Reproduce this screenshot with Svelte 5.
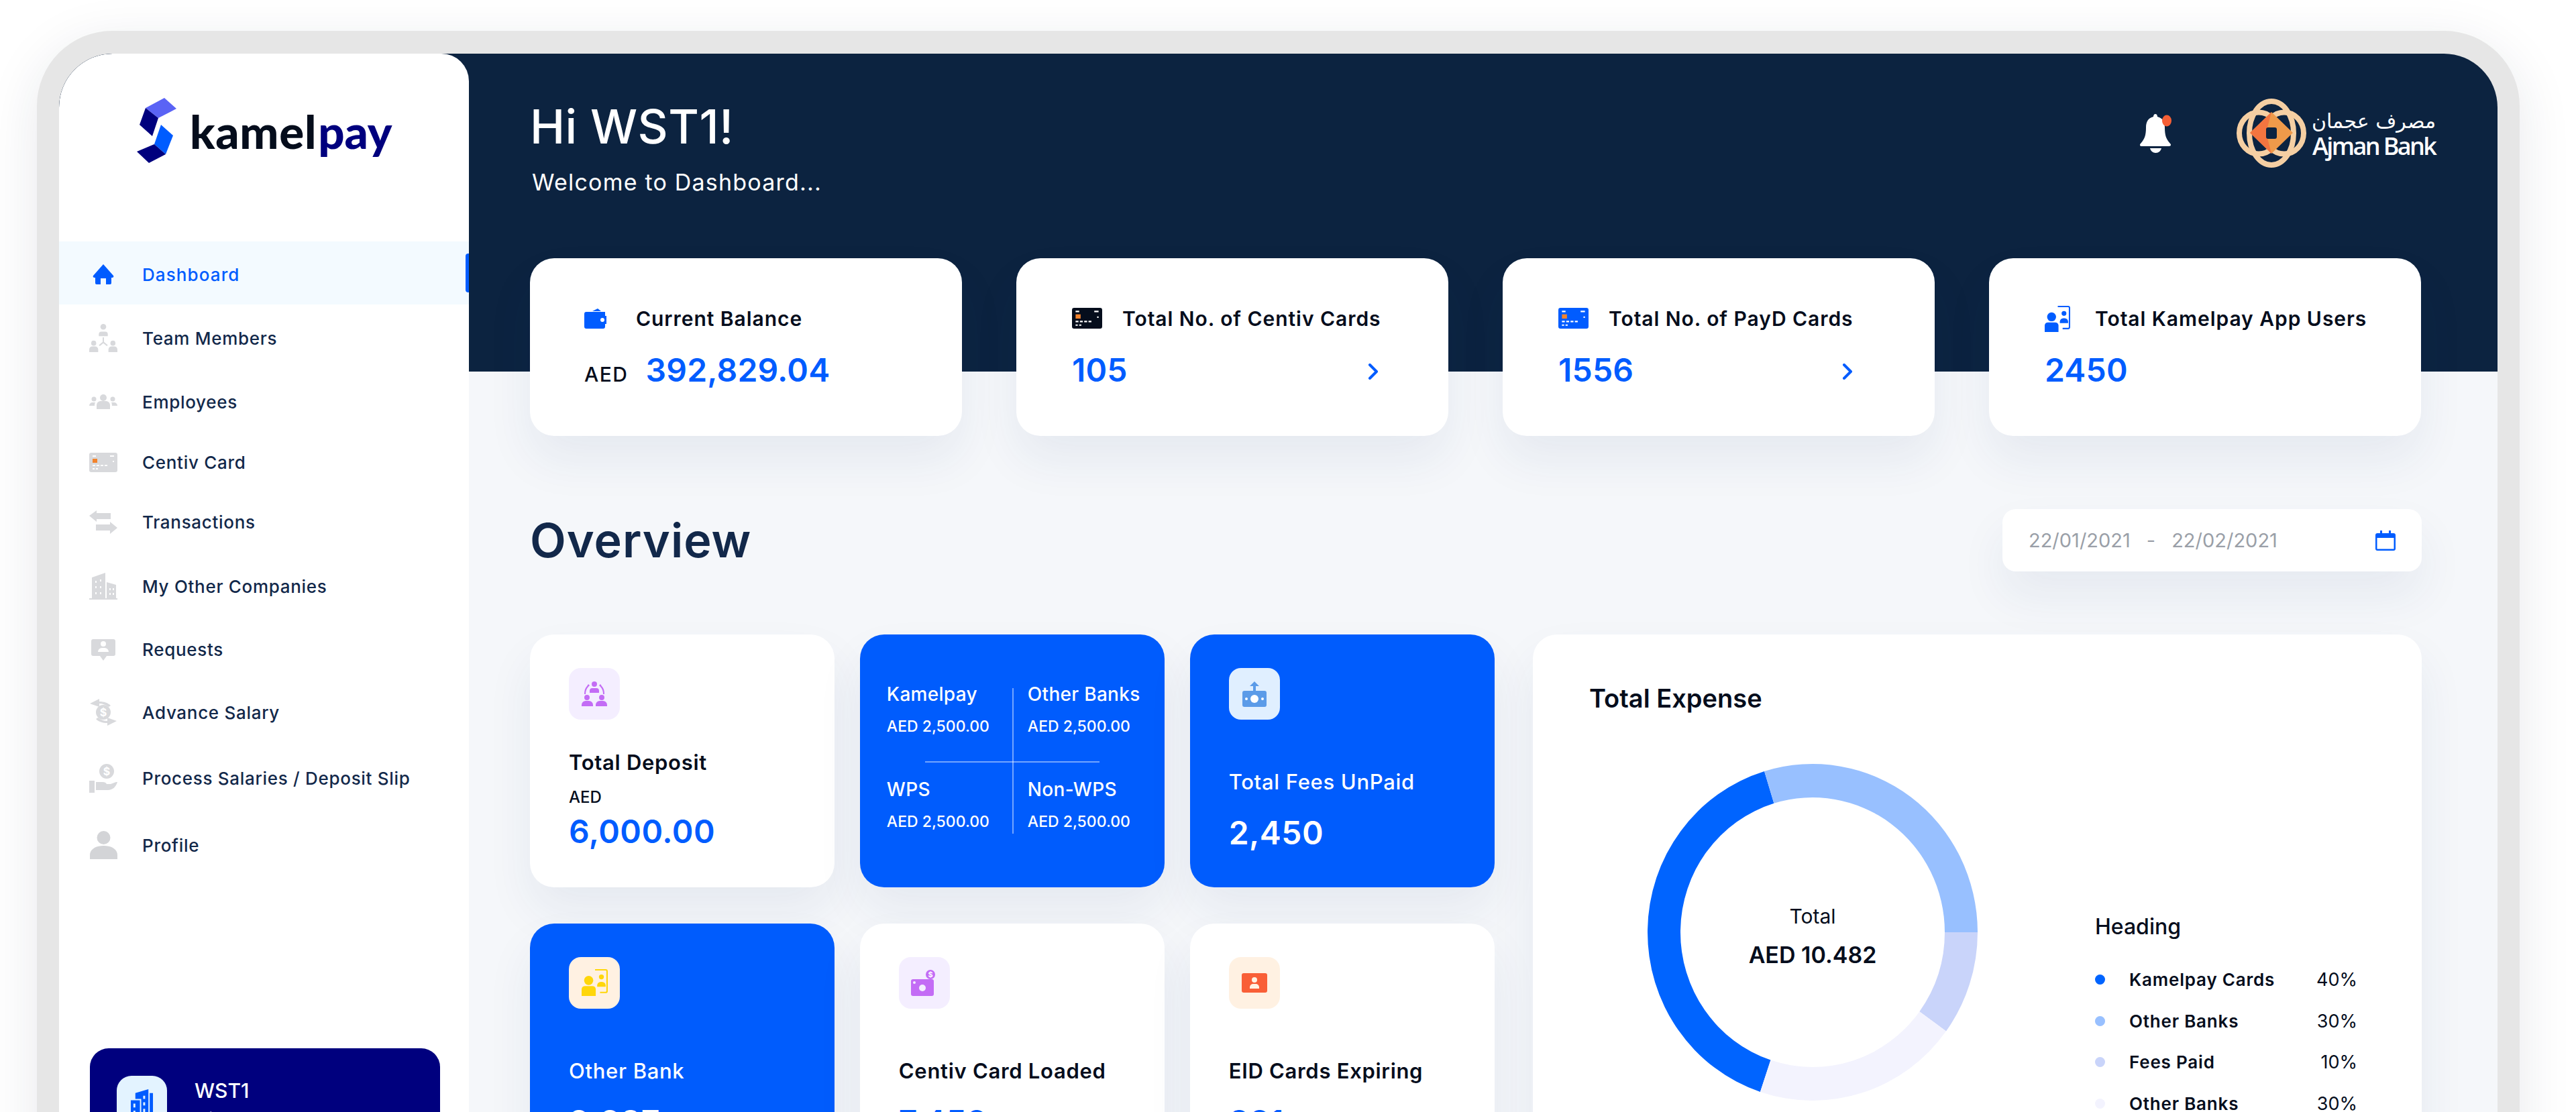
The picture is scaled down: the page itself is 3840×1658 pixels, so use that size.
<script>
  const c = (x, y, r) => `M${x - r} ${y}a${r} ${r} 0 1 0 ${2 * r} 0a${r} ${r} 0 1 0 ${-2 * r} 0z`;
  const G = '#d8d9dc';
  const W = '#ffffff';

  const cardIcon = (bg, dash) => [
    { d: 'M3 0h36a3 3 0 0 1 3 3v23a3 3 0 0 1-3 3H3a3 3 0 0 1-3-3V3a3 3 0 0 1 3-3z', f: bg },
    { d: 'M5 4h5v2H5zM31 4h6v2h-6zM5 18h4v2H5zM11 18h4v2h-4zM17 18h4v2h-4zM23 18h4v2h-4zM35 12h2v2h-2zM5 23h3v2H5zM10 23h3v2h-3z', f: dash },
    { d: 'M5 9h7v6H5z', f: '#f2832d' }
  ];
  const usersIcon = (fg) => [
    { d: 'M19 0h15a3 3 0 0 1 3 3v28a3 3 0 0 1-3 3H26v-2h8a1 1 0 0 0 1-1V3a1 1 0 0 0-1-1H19z', f: fg },
    { d: c(28, 11, 3.5), f: fg },
    { d: 'M22 23a5 5 0 0 1 5-5h2a5 5 0 0 1 5 5v2H22z', f: fg },
    { d: c(10, 16, 6.5), f: fg },
    { d: 'M0 38V28a5 5 0 0 1 5-4h10a5 5 0 0 1 5 4v10z', f: fg }
  ];

  const nav = [
    { label: 'Dashboard', h: 94, active: true, w: 32, vb: '0 0 32 30', shapes: [
      { d: 'M16 0 31 17c1 1.500 0 3-2 3h-1v8a2 2 0 0 1-2 2h-6v-9h-8v9H6a2 2 0 0 1-2-2v-8H3c-2 0-3-1.500-2-3z', f: '#005cff' }
    ] },
    { label: 'Team Members', h: 100, w: 44, vb: '0 0 44 44', shapes: [
      { d: c(22, 4.500, 4.500), f: G },
      { d: 'M15 19v-3a4 4 0 0 1 4-4h6a4 4 0 0 1 4 4v3z', f: G },
      { d: 'M21 21h2v7l6 5-1.500 1.500L22 30l-5.500 4.500L15 33l6-5z', f: G },
      { d: c(7, 30, 4), f: G },
      { d: 'M0 44v-4a5 5 0 0 1 5-5h4a5 5 0 0 1 5 5v4z', f: G },
      { d: c(37, 30, 4), f: G },
      { d: 'M30 44v-4a5 5 0 0 1 5-5h4a5 5 0 0 1 5 5v4z', f: G }
    ] },
    { label: 'Employees', h: 90, w: 42, vb: '0 0 42 22', shapes: [
      { d: c(21, 5, 5), f: G },
      { d: 'M11 22v-6a6 6 0 0 1 6-6h8a6 6 0 0 1 6 6v6z', f: G },
      { d: c(7, 7, 3.500), f: G },
      { d: 'M0 17a5 5 0 0 1 5-5h4a8 8 0 0 0-1 5z', f: G },
      { d: c(35, 7, 3.500), f: G },
      { d: 'M42 17a5 5 0 0 0-5-5h-4a8 8 0 0 1 1 5z', f: G }
    ] },
    { label: 'Centiv Card', h: 90, w: 42, vb: '0 0 42 29', shapes: cardIcon(G, W) },
    { label: 'Transactions', h: 89, w: 42, vb: '0 0 42 35', shapes: [
      { d: 'M0 8 11 0v4h21v9H11v4z', f: G },
      { d: 'M42 26 31 35v-5H10v-9h21v-4z', f: G }
    ] },
    { label: 'My Other Companies', h: 102, w: 42, vb: '0 0 42 40', shapes: [
      { d: 'M4 38V7L24 0v38zM26 14l14 4v20H26zM0 38h42v2H0z', f: G },
      { d: 'M9 12h2v3H9zM16 10h2v3h-2zM9 20h2v3H9zM16 20h2v3h-2zM9 29h2v3H9zM16 29h2v3h-2zM30 23h2v3h-2zM35 23h2v3h-2zM30 30h2v3h-2zM35 30h2v3h-2z', f: W }
    ] },
    { label: 'Requests', h: 87, w: 36, vb: '0 0 36 32', shapes: [
      { d: 'M3 0h30a3 3 0 0 1 3 3v19a3 3 0 0 1-3 3H23l-5 7-5-7H3a3 3 0 0 1-3-3V3a3 3 0 0 1 3-3z', f: G },
      { d: c(18, 7, 4), f: W },
      { d: 'M10 19a6 6 0 0 1 6-6h4a6 6 0 0 1 6 6z', f: W }
    ] },
    { label: 'Advance Salary', h: 100, w: 40, vb: '0 0 40 40', shapes: [
      { d: c(20, 20, 11), f: G },
      { d: 'M0 7 14 0v4c7 0 13 2 17 6l-3 2c-4-3-9-5-14-5v5z', f: G },
      { d: 'M40 33 26 40v-4c-7 0-13-2-17-6l3-2c4 3 9 5 14 5v-5z', f: G }
    ], dollar: [20, 26] },
    { label: 'Process Salaries / Deposit Slip', h: 96, w: 42, vb: '0 0 42 43', shapes: [
      { d: c(26, 11, 11), f: G },
      { d: 'M0 25h8v18H0zM10 27h10c3 0 5 1 6 3h6l8-3h2c-2 7-7 12-14 12H10z', f: G }
    ], dollar: [26, 17] },
    { label: 'Profile', h: 104, w: 41, vb: '0 0 41 42', shapes: [
      { d: c(20.500, 10, 10), f: '#d3d4d7' },
      { d: 'M0 42v-6c0-9 9-14 20.500-14S41 27 41 36v6z', f: '#d3d4d7' }
    ] }
  ];

  const stats = [
    { title: 'Current Balance', value: '392,829.04', aed: true, w: 34, vb: '0 0 34 30', shapes: [
      { d: 'M3 5h28v6h2v12h-2v4a3 3 0 0 1-3 3H3a3 3 0 0 1-3-3V8a3 3 0 0 1 3-3z', f: '#005cff' },
      { d: 'M12 4 20 0l5 4z', f: '#005cff' },
      { d: c(27, 17, 3), f: W }
    ] },
    { title: 'Total No. of Centiv Cards', value: '105', arrow: true, w: 45, vb: '0 0 42 29', shapes: cardIcon('#050d1c', W) },
    { title: 'Total No. of PayD Cards', value: '1556', arrow: true, w: 45, vb: '0 0 42 29', shapes: cardIcon('#005cff', W) },
    { title: 'Total Kamelpay App Users', value: '2450', w: 38, vb: '0 0 37 38', shapes: usersIcon('#005cff') }
  ];

  const cells = [
    ['Kamelpay', 'AED 2,500.00'],
    ['Other Banks', 'AED 2,500.00'],
    ['WPS', 'AED 2,500.00'],
    ['Non-WPS', 'AED 2,500.00']
  ];

  const legend = [
    ['Kamelpay Cards', '40%', '#0064ff'],
    ['Other Banks', '30%', '#98c0ff'],
    ['Fees Paid', '10%', '#c9d4fa'],
    ['Other Banks', '30%', '#f3f3fe']
  ];

  const RX = 246, RY = 251, IX = 197, IY = 201;
  const pt = (a, rx, ry) => {
    const t = (a * Math.PI) / 180;
    return `${(RX + rx * Math.cos(t)).toFixed(2)} ${(RY + ry * Math.sin(t)).toFixed(2)}`;
  };
  const arc = (a, b) =>
    `M${pt(a, RX, RY)}A${RX} ${RY} 0 0 1 ${pt(b, RX, RY)}L${pt(b, IX, IY)}A${IX} ${IY} 0 0 0 ${pt(a, IX, IY)}Z`;
  const donut = [
    { d: arc(108.5, 253), f: '#0064ff' },
    { d: arc(253, 360), f: '#98c0ff' },
    { d: arc(0, 36), f: '#c9d4fa' },
    { d: arc(36, 108.5), f: '#f3f3fe' }
  ];
</script>

{#snippet shapes(list)}
  {#each list as s}
    <path d={s.d} fill={s.f} fill-rule="evenodd" />
  {/each}
{/snippet}

<div class="page">
  <div class="frame">
    <div class="screen">
      <aside class="sidebar">
        <div class="logo">
          <svg class="logo-mark" width="59" height="97" viewBox="0 0 59 97">
            <polygon points="13,15 41,0 59,16 32,30" fill="#5a63f5" />
            <polygon points="13,15 32,30 23,57 4,40" fill="#00007e" />
            <polygon points="36,40 54,56 43,84 26,69" fill="#005cff" />
            <polygon points="26,69 43,84 18,97 0,80" fill="#00007e" />
          </svg>
          <span class="logo-text"><span class="kamel">kamel</span><span class="pay">pay</span></span>
        </div>

        <nav class="nav">
          {#each nav as item}
            <div class="nav-row" class:active={item.active} style="height:{item.h}px">
              <span class="nav-icon">
                <svg width={item.w} viewBox={item.vb}>
                  {@render shapes(item.shapes)}
                  {#if item.dollar}
                    <text x={item.dollar[0]} y={item.dollar[1]} class="dollar" text-anchor="middle">$</text>
                  {/if}
                </svg>
              </span>
              <span class="nav-label">{item.label}</span>
            </div>
          {/each}
        </nav>

        <div class="company">
          <div class="company-icon">
            <svg width="35" height="47" viewBox="0 0 36 48">
              <path d="M8 12 28 6v42H8zM30 12h5v36h-5z" fill="#005cff" />
              <path d="M0 22h16v26H0z" fill="#005cff" stroke="#e3f3ff" stroke-width="2" />
              <path d="M5 28h3v6H5zM5 39h3v6H5zM20 16h3v5h-3zM20 26h3v5h-3zM20 36h3v5h-3z" fill="#e3f3ff" />
            </svg>
          </div>
          <div class="company-text">
            <div class="company-name">WST1</div>
            <div class="company-id">Client ID : 1700045</div>
          </div>
        </div>
      </aside>

      <main class="main">
        <header class="topbar">
          <div class="greet">
            <h1>Hi WST1!</h1>
            <p>Welcome to Dashboard...</p>
          </div>
          <div class="top-right">
            <svg class="bell" width="47" height="58" viewBox="0 0 47 58">
              <path d="M23 0c2 0 3 2 3 4 8 2 11 8 11 16 0 12 2 17 8 24 2 2 1 4-2 4H3c-3 0-4-2-2-4 6-7 8-12 8-24 0-8 3-14 11-16 0-2 1-4 3-4z" fill="#fff" />
              <path d="M15 51h17c-1 4-4 7-8.500 7S16 55 15 51z" fill="#fff" />
              <ellipse cx="40" cy="10" rx="7" ry="8.500" fill="#f55f36" />
            </svg>
            <div class="bank">
              <svg width="104" height="103" viewBox="0 0 104 103">
                <g fill="none" stroke="#f5cfa3" stroke-width="8">
                  <ellipse cx="52" cy="51.500" rx="33" ry="47.500" />
                  <ellipse cx="33" cy="51.500" rx="29" ry="31" />
                  <ellipse cx="71" cy="51.500" rx="29" ry="31" />
                </g>
                <path d="M52 20 84 51 52 82 20 51z" fill="#ef9a4a" />
                <path d="M52 20 20 51 52 82 44 51z" fill="#f5683d" opacity=".75" />
                <rect x="44" y="43" width="16" height="17" rx="3" fill="#0c2340" />
              </svg>
              <div class="bank-text">
                <div class="bank-ar" dir="rtl" lang="ar">مصرف عجمان</div>
                <div class="bank-en">Ajman Bank</div>
              </div>
            </div>
          </div>
        </header>

        <section class="stats">
          {#each stats as s}
            <div class="stat card">
              <div class="stat-title">
                <span class="stat-icon">
                  <svg width={s.w} viewBox={s.vb}>{@render shapes(s.shapes)}</svg>
                </span>
                <span>{s.title}</span>
              </div>
              <div class="stat-value">
                {#if s.aed}<span class="aed">AED</span>{/if}
                <span class="num">{s.value}</span>
                {#if s.arrow}
                  <svg class="chev" width="16" height="24" viewBox="0 0 16 24">
                    <path d="M3 2 13 12 3 22" fill="none" stroke="#005cff" stroke-width="4" stroke-linecap="round" stroke-linejoin="round" />
                  </svg>
                {/if}
              </div>
            </div>
          {/each}
        </section>

        <div class="overview-row">
          <h2>Overview</h2>
          <div class="dates">
            <span class="date">22/01/2021</span>
            <span class="dash">-</span>
            <span class="date">22/02/2021</span>
            <svg class="cal" width="30" height="30" viewBox="0 0 30 30">
              <path d="M3 4h4V0h3v4h10V0h3v4h4a3 3 0 0 1 3 3v20a3 3 0 0 1-3 3H3a3 3 0 0 1-3-3V7a3 3 0 0 1 3-3zM2.500 11v16.500h25V11z" fill="#005cff" fill-rule="evenodd" />
            </svg>
          </div>
        </div>

        <section class="lower">
          <div class="tiles">
            <div class="tile card deposit">
              <div class="tile-box purple">
                <svg width="38" viewBox="0 0 38 37">
                  <path d="M19 0a4 4 0 1 1 0 8 4 4 0 0 1 0-8zM12 17v-3a4 4 0 0 1 4-4h6a4 4 0 0 1 4 4v3zM10 4 8 7C5 10 4 14 4 19h2c0-4 1-8 4-11l2-2zM28 4l2 3c3 3 4 7 4 12h-2c0-4-1-8-4-11l-2-2z" fill="#c36cf5" />
                  <path d="M8 20a4 4 0 1 1 0 8 4 4 0 0 1 0-8zM0 37v-2a6 6 0 0 1 6-6h5a6 6 0 0 1 6 6v2zM30 20a4 4 0 1 1 0 8 4 4 0 0 1 0-8zM21 37v-2a6 6 0 0 1 6-6h5a6 6 0 0 1 6 6v2z" fill="#c36cf5" />
                </svg>
              </div>
              <div class="tile-title dark">Total Deposit</div>
              <div class="tile-aed">AED</div>
              <div class="tile-value blue">6,000.00</div>
            </div>

            <div class="tile split">
              {#each cells as cell}
                <div class="cell">
                  <div class="cell-name">{cell[0]}</div>
                  <div class="cell-amount">{cell[1]}</div>
                </div>
              {/each}
              <span class="line-v"></span>
              <span class="line-h"></span>
            </div>

            <div class="tile solid">
              <div class="tile-box sky">
                <svg width="36" viewBox="0 0 36 38">
                  <path d="M3 14h30a3 3 0 0 1 3 3v18a3 3 0 0 1-3 3H3a3 3 0 0 1-3-3V17a3 3 0 0 1 3-3z" fill="#5b9be8" />
                  <path d="M18 0l7 7h-5v7h-4V7h-5z" fill="#5b9be8" />
                  <circle cx="18" cy="26" r="6" fill="#fff" />
                  <circle cx="6" cy="26" r="2" fill="#fff" />
                  <circle cx="30" cy="26" r="2" fill="#fff" />
                </svg>
              </div>
              <div class="tile-title">Total Fees UnPaid</div>
              <div class="tile-value">2,450</div>
            </div>

            <div class="tile solid">
              <div class="tile-box peach">
                <svg width="39" viewBox="0 0 37 38">{@render shapes(usersIcon('#ffd60a'))}</svg>
              </div>
              <div class="tile-title">Other Bank</div>
              <div class="tile-value">2,287</div>
            </div>

            <div class="tile card">
              <div class="tile-box purple">
                <svg width="39" viewBox="0 0 39 39">
                  <path d="M3 14h28a3 3 0 0 1 3 3v19a3 3 0 0 1-3 3H3a3 3 0 0 1-3-3V17a3 3 0 0 1 3-3z" fill="#c36cf5" />
                  <circle cx="17" cy="27" r="5" fill="#f4eeff" />
                  <circle cx="5" cy="19" r="2" fill="#f4eeff" />
                  <circle cx="29" cy="7" r="7" fill="#c36cf5" />
                  <text x="29" y="11" class="dollar small" text-anchor="middle">$</text>
                </svg>
              </div>
              <div class="tile-title dark">Centiv Card Loaded</div>
              <div class="tile-value blue">7,452</div>
            </div>

            <div class="tile card">
              <div class="tile-box peach">
                <svg width="38" viewBox="0 0 38 29">
                  <path d="M3 0h32a3 3 0 0 1 3 3v23a3 3 0 0 1-3 3H3a3 3 0 0 1-3-3V3a3 3 0 0 1 3-3z" fill="#f95f37" />
                  <circle cx="19" cy="10" r="4" fill="#fff3e4" />
                  <path d="M12 23v-2a5 5 0 0 1 5-5h4a5 5 0 0 1 5 5v2z" fill="#fff3e4" />
                </svg>
              </div>
              <div class="tile-title dark">EID Cards Expiring</div>
              <div class="tile-value blue">321</div>
            </div>
          </div>

          <div class="expense card">
            <h3>Total Expense</h3>
            <div class="donut">
              <svg width="492" height="502" viewBox="0 0 492 502">{@render shapes(donut)}</svg>
              <div class="donut-center">
                <div class="dc-label">Total</div>
                <div class="dc-value">AED 10.482</div>
              </div>
            </div>
            <div class="legend">
              <div class="legend-head">Heading</div>
              {#each legend as row}
                <div class="legend-row">
                  <span class="dot" style="background:{row[2]}"></span>
                  <span class="legend-name">{row[0]}</span>
                  <span class="legend-pct">{row[1]}</span>
                </div>
              {/each}
            </div>
          </div>
        </section>
      </main>
    </div>
  </div>
</div>

<style>
  :global(body) {
    margin: 0;
    background: #fff;
    font-family: Inter, "Noto Sans", sans-serif;
  }
  h1, h2, h3, p { margin: 0; }

  .page {
    width: 3840px;
    height: 1658px;
    overflow: hidden;
    padding: 46px 84px 0 55px;
    box-sizing: border-box;
  }
  .frame {
    height: 1800px;
    box-sizing: border-box;
    padding: 34px 33px 0;
    background: #e6e6e6;
    border-radius: 112px;
    box-shadow: 0 20px 80px rgba(30, 40, 70, 0.1);
  }
  .screen {
    display: flex;
    height: 1760px;
    border-radius: 80px;
    overflow: hidden;
    background: linear-gradient(#0c2340 474px, #f5f7fa 474px);
  }

  .sidebar {
    width: 611px;
    flex: none;
    background: #fff;
    border-radius: 80px 41px 0 0;
  }
  .logo {
    height: 280px;
    box-sizing: border-box;
    padding: 66px 0 0 116px;
    display: flex;
    align-items: flex-start;
    gap: 20px;
  }
  .logo-text {
    display: block;
    margin-top: 10px;
    font-family: Lato, sans-serif;
    font-weight: 900;
    line-height: 80px;
    white-space: nowrap;
  }
  .kamel { color: #050d1c; font-size: 69px; letter-spacing: 0.700px; margin-right: 2px; }
  .pay { color: #00007e; font-size: 69px; }

  .nav-row {
    position: relative;
    display: flex;
    align-items: center;
    padding-left: 45px;
    box-sizing: border-box;
    font-size: 26px;
    font-weight: 450;
    color: #12284a;
  }
  .nav-row.active {
    background: #f3faff;
    color: #005cff;
    font-weight: 500;
    padding-top: 4px;
  }
  .nav-row.active .nav-label { letter-spacing: 1.100px; }
  .nav-row.active::after {
    content: "";
    position: absolute;
    right: 0;
    top: 18px;
    width: 5px;
    height: 58px;
    background: #005cff;
    border-radius: 4px 0 0 4px;
  }
  .nav-icon {
    width: 42px;
    margin-right: 37px;
    display: flex;
    justify-content: center;
    flex: none;
  }
  .nav-icon svg { display: block; }
  .nav-label { letter-spacing: 0.700px; white-space: nowrap; }
  .dollar {
    font-family: Inter, sans-serif;
    font-size: 16px;
    font-weight: 700;
    fill: #fff;
  }
  .dollar.small { font-size: 11px; }

  .company {
    margin: 251px 0 0 46px;
    width: 522px;
    height: 200px;
    box-sizing: border-box;
    padding: 41px 0 0 40px;
    display: flex;
    align-items: flex-start;
    gap: 41px;
    background: #00007e;
    border-radius: 28px;
    color: #fff;
  }
  .company-icon {
    width: 75px;
    height: 90px;
    display: flex;
    align-items: flex-start;
    justify-content: center;
    padding-top: 14px;
    box-sizing: border-box;
    background: #e3f3ff;
    border-radius: 22px;
  }
  .company-name { font-size: 30px; font-weight: 500; line-height: 44px; }
  .company-id { font-size: 22px; margin-top: 5px; }

  .main {
    flex: 1;
    min-width: 0;
    padding: 0 113px 0 91px;
  }
  .topbar {
    height: 305px;
    display: flex;
    justify-content: space-between;
    color: #fff;
  }
  .greet { padding-top: 69px; }
  .greet h1 { font-size: 70px; font-weight: 500; line-height: 80px; letter-spacing: 0.500px; }
  .greet p {
    font-size: 34px;
    line-height: 40px;
    font-weight: 400;
    margin: 23px 0 0 3px;
    letter-spacing: 1.200px;
  }
  .top-right {
    display: flex;
    align-items: flex-start;
    margin-right: -21px;
  }
  .bell { margin: 90px 97px 0 0; }
  .bank { display: flex; margin-top: 67px; gap: 9px; }
  .bank-text { width: 184px; color: #fff; }
  .bank-ar {
    font-family: "DejaVu Sans", sans-serif;
    font-size: 30px;
    line-height: 32px;
    margin-top: 18px;
    white-space: nowrap;
  }
  .bank-en {
    font-family: "Open Sans", sans-serif;
    font-weight: 600;
    font-size: 36px;
    line-height: 40px;
    letter-spacing: -2.600px;
    margin-top: 1px;
    white-space: nowrap;
  }

  .card {
    background: #fff;
    box-shadow: 0 36px 70px rgba(30, 60, 110, 0.07);
  }
  .stats {
    display: grid;
    grid-template-columns: repeat(4, 644px);
    gap: 81px;
  }
  .stat {
    height: 265px;
    box-sizing: border-box;
    padding: 75px 122px 0 83px;
    border-radius: 36px;
    color: #050d1c;
  }
  .stat:first-child { padding-left: 81px; }
  .stat:first-child .stat-icon { min-width: 77px; }
  .stat-title {
    display: flex;
    align-items: center;
    height: 30px;
    font-size: 30px;
    font-weight: 600;
    white-space: nowrap;
    letter-spacing: 0.950px;
  }
  .stat-icon { min-width: 75px; }
  .stat-icon svg { display: block; }
  .stat-value {
    position: relative;
    display: flex;
    align-items: baseline;
    margin-top: 32px;
    line-height: 60px;
  }
  .aed { font-size: 30px; font-weight: 500; letter-spacing: 1.500px; margin-right: 26px; }
  .num { font-size: 48px; font-weight: 600; color: #005cff; letter-spacing: 0.200px; }
  .chev { position: absolute; right: 0; top: 20px; }
  .stat:nth-child(2) .chev { right: -18px; }

  .overview-row {
    margin-top: 109px;
    height: 93px;
    display: flex;
    align-items: center;
    justify-content: space-between;
  }
  .overview-row h2 {
    font-size: 70px;
    font-weight: 600;
    color: #12284a;
    letter-spacing: 1px;
  }
  .dates {
    width: 625px;
    height: 93px;
    box-sizing: border-box;
    padding: 0 39px;
    display: flex;
    align-items: center;
    background: #fff;
    border-radius: 20px;
    box-shadow: 0 36px 70px rgba(30, 60, 110, 0.07);
    color: #9a9fa8;
    font-size: 29px;
  }
  .dash { margin: 0 24px; }
  .cal { margin-left: auto; }

  .lower {
    margin-top: 94px;
    display: flex;
    gap: 57px;
  }
  .tiles {
    width: 1438px;
    flex: none;
    display: grid;
    grid-template-columns: repeat(3, 1fr);
    grid-auto-rows: 377px;
    gap: 54px 37.5px;
  }
  .tile {
    position: relative;
    box-sizing: border-box;
    padding: 50px 58px 0;
    border-radius: 36px;
  }
  .tile.solid, .tile.split {
    background: #005cfd;
    color: #fff;
    box-shadow: 0 36px 70px rgba(30, 60, 110, 0.07);
  }
  .tile-box {
    width: 76px;
    height: 77px;
    border-radius: 18px;
    display: flex;
    align-items: center;
    justify-content: center;
  }
  .purple { background: #f4eeff; }
  .sky { background: #e0efff; }
  .peach { background: #fff1e2; }
  .tile-title {
    margin-top: 73px;
    font-size: 31px;
    line-height: 40px;
    font-weight: 500;
    white-space: nowrap;
    letter-spacing: 0.700px;
  }
  .tile-title.dark { font-weight: 600; color: #050d1c; }
  .tile-value {
    margin-top: 26px;
    font-size: 48px;
    line-height: 60px;
    font-weight: 600;
    letter-spacing: 0.5px;
  }
  .blue { color: #005cff; }
  .deposit .tile-title { margin-top: 44px; }
  .deposit .tile-aed {
    margin-top: 17px;
    font-size: 24px;
    line-height: 30px;
    font-weight: 500;
    color: #050d1c;
  }
  .deposit .tile-value { margin-top: 6px; }

  .tile.split {
    padding: 72px 0 0 40px;
    display: grid;
    grid-template-columns: 210px 1fr;
    grid-auto-rows: 142px;
    align-content: start;
  }
  .cell-name { font-size: 28px; line-height: 34px; font-weight: 500; letter-spacing: 0.300px; white-space: nowrap; }
  .cell-amount { margin-top: 16px; font-size: 23px; line-height: 30px; font-weight: 500; white-space: nowrap; }
  .line-v {
    position: absolute;
    left: 227px;
    top: 80px;
    width: 2px;
    height: 217px;
    background: rgba(255, 255, 255, 0.45);
  }
  .line-h {
    position: absolute;
    left: 97px;
    top: 189px;
    width: 260px;
    height: 2px;
    background: rgba(255, 255, 255, 0.45);
  }

  .expense {
    position: relative;
    flex: 1;
    height: 800px;
    border-radius: 36px;
    box-sizing: border-box;
    padding: 72px 0 0 84px;
  }
  .expense h3 {
    font-size: 38px;
    line-height: 46px;
    font-weight: 600;
    color: #050d1c;
  }
  .donut {
    position: absolute;
    left: 171px;
    top: 193px;
    width: 492px;
    height: 502px;
  }
  .donut svg { display: block; }
  .donut-center {
    position: absolute;
    inset: 0;
    text-align: center;
    color: #050d1c;
    padding-top: 209px;
    box-sizing: border-box;
  }
  .dc-label { font-size: 30px; line-height: 36px; font-weight: 400; }
  .dc-value { margin-top: 18px; font-size: 34px; line-height: 44px; font-weight: 600; }
  .legend {
    position: absolute;
    left: 838px;
    top: 416px;
    width: 391px;
    color: #050d1c;
  }
  .legend-head { font-size: 32px; line-height: 40px; font-weight: 500; margin-bottom: 28px; }
  .legend-row {
    display: flex;
    align-items: center;
    height: 61.500px;
    font-size: 26px;
    font-weight: 600;
    letter-spacing: 0.800px;
  }
  .dot { width: 15px; height: 15px; border-radius: 50%; margin-right: 36px; flex: none; }
  .legend-pct { margin-left: auto; font-weight: 400; font-size: 27px; letter-spacing: 0; }
</style>
